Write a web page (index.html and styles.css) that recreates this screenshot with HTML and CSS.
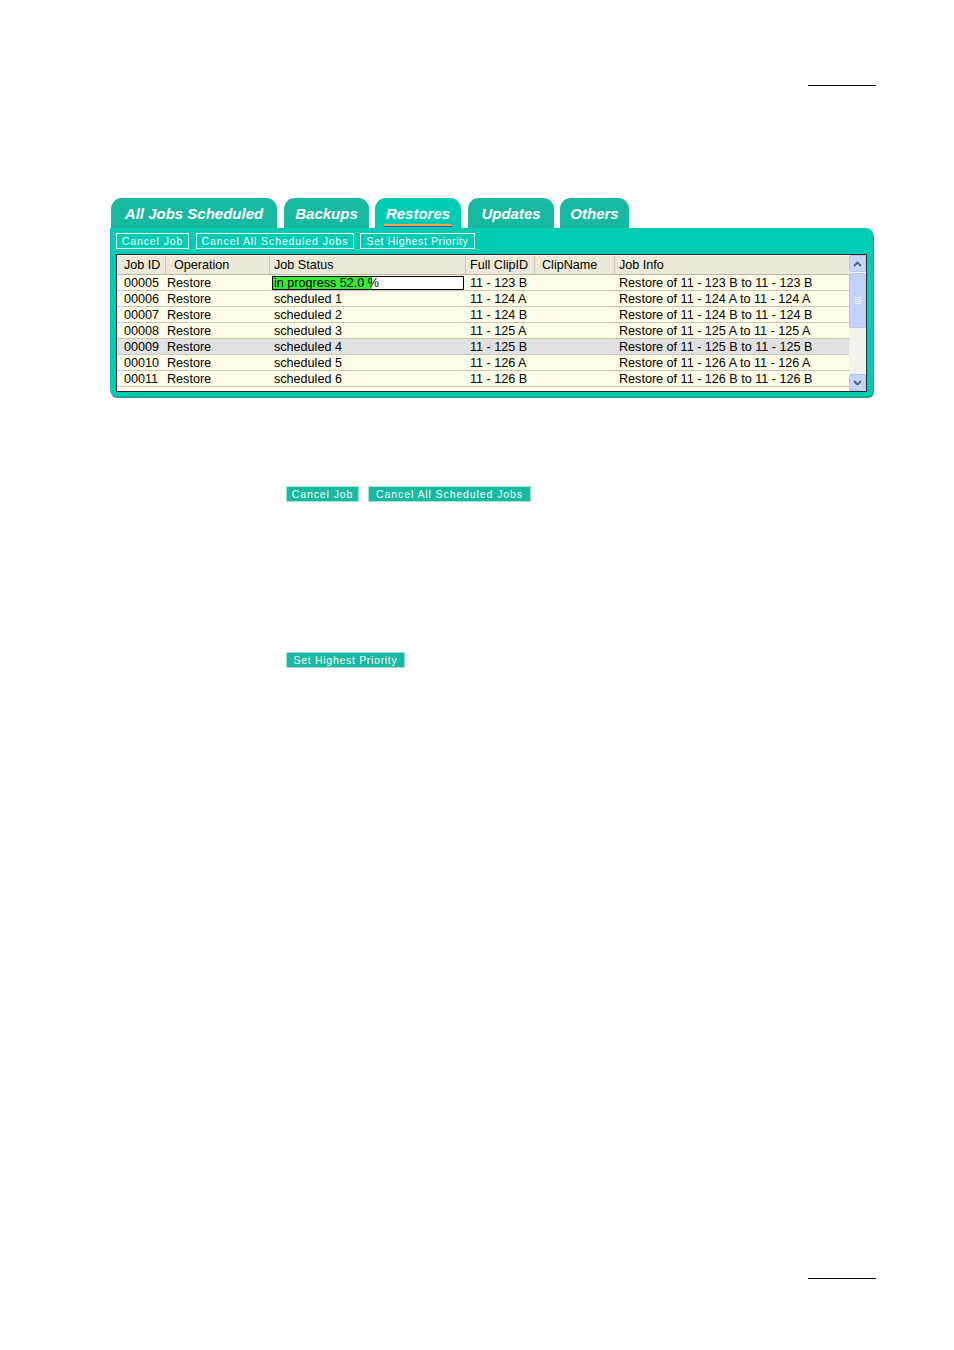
FILE: index.html
```html
<!DOCTYPE html>
<html>
<head>
<meta charset="utf-8">
<link rel="stylesheet" href="styles.css">
</head>
<body>
<div class="page">
  <div class="rule rule-top"></div>

  <div class="panel">
    <div class="tabs">
      <div class="tab tab-all">All Jobs Scheduled</div>
      <div class="tab tab-backups">Backups</div>
      <div class="tab tab-active tab-restores"><span class="uline">Restores</span></div>
      <div class="tab tab-updates">Updates</div>
      <div class="tab tab-others">Others</div>
    </div>
    <div class="panel-body">
      <div class="toolbar">
        <div class="obtn b1">Cancel Job</div>
        <div class="obtn b2">Cancel All Scheduled Jobs</div>
        <div class="obtn b3">Set Highest Priority</div>
      </div>
      <div class="grid-wrap">
        <div class="grid">
          <div class="row head">
            <div class="c c1">Job ID</div>
            <div class="c c2">Operation</div>
            <div class="c c3">Job Status</div>
            <div class="c c4">Full ClipID</div>
            <div class="c c5">ClipName</div>
            <div class="c c6">Job Info</div>
          </div>
          <div class="row">
            <div class="c c1">00005</div>
            <div class="c c2">Restore</div>
            <div class="c c3 prog-cell"><div class="prog"><div class="prog-fill" style="width:52%"></div><span class="prog-text">in progress 52.0 %</span></div></div>
            <div class="c c4">11 - 123 B</div>
            <div class="c c5"></div>
            <div class="c c6">Restore of 11 - 123 B to 11 - 123 B</div>
          </div>
          <div class="row">
            <div class="c c1">00006</div>
            <div class="c c2">Restore</div>
            <div class="c c3">scheduled 1</div>
            <div class="c c4">11 - 124 A</div>
            <div class="c c5"></div>
            <div class="c c6">Restore of 11 - 124 A to 11 - 124 A</div>
          </div>
          <div class="row">
            <div class="c c1">00007</div>
            <div class="c c2">Restore</div>
            <div class="c c3">scheduled 2</div>
            <div class="c c4">11 - 124 B</div>
            <div class="c c5"></div>
            <div class="c c6">Restore of 11 - 124 B to 11 - 124 B</div>
          </div>
          <div class="row">
            <div class="c c1">00008</div>
            <div class="c c2">Restore</div>
            <div class="c c3">scheduled 3</div>
            <div class="c c4">11 - 125 A</div>
            <div class="c c5"></div>
            <div class="c c6">Restore of 11 - 125 A to 11 - 125 A</div>
          </div>
          <div class="row sel">
            <div class="c c1">00009</div>
            <div class="c c2">Restore</div>
            <div class="c c3">scheduled 4</div>
            <div class="c c4">11 - 125 B</div>
            <div class="c c5"></div>
            <div class="c c6">Restore of 11 - 125 B to 11 - 125 B</div>
          </div>
          <div class="row">
            <div class="c c1">00010</div>
            <div class="c c2">Restore</div>
            <div class="c c3">scheduled 5</div>
            <div class="c c4">11 - 126 A</div>
            <div class="c c5"></div>
            <div class="c c6">Restore of 11 - 126 A to 11 - 126 A</div>
          </div>
          <div class="row">
            <div class="c c1">00011</div>
            <div class="c c2">Restore</div>
            <div class="c c3">scheduled 6</div>
            <div class="c c4">11 - 126 B</div>
            <div class="c c5"></div>
            <div class="c c6">Restore of 11 - 126 B to 11 - 126 B</div>
          </div>
          <div class="row partial"></div>
        </div>
        <div class="scrollbar">
          <div class="sb-btn">
            <svg width="9" height="6" viewBox="0 0 9 6"><path d="M1 5 L4.5 1.5 L8 5" fill="none" stroke="#4d6185" stroke-width="1.8"/></svg>
          </div>
          <div class="sb-thumb">
            <div class="grip"></div><div class="grip"></div><div class="grip"></div><div class="grip"></div>
          </div>
          <div class="sb-track"></div>
          <div class="sb-btn">
            <svg width="9" height="6" viewBox="0 0 9 6"><path d="M1 1 L4.5 4.5 L8 1" fill="none" stroke="#4d6185" stroke-width="1.8"/></svg>
          </div>
        </div>
      </div>
    </div>
  </div>

  <div class="btn-row btn-row-1">
    <div class="fbtn f1">Cancel Job</div>
    <div class="fbtn f2">Cancel All Scheduled Jobs</div>
  </div>

  <div class="btn-row btn-row-2">
    <div class="fbtn f3">Set Highest Priority</div>
  </div>

  <div class="rule rule-bottom"></div>
</div>
</body>
</html>
```

FILE: styles.css
```css
html, body {
  margin: 0;
  padding: 0;
  background: #ffffff;
}

.page {
  width: 954px;
  height: 1350px;
  display: flow-root;
  overflow: hidden;
  font-family: "Liberation Sans", Arial, sans-serif;
}

.rule {
  width: 68px;
  margin-left: 808px;
  border-top: 1px solid #000;
}

.rule-top {
  margin-top: 85px;
}

.rule-bottom {
  margin-top: 609px;
}

/* ---------- panel ---------- */
.panel {
  margin-top: 112px;
  margin-left: 110px;
  width: 764px;
}

.tabs {
  display: flex;
  height: 30px;
  padding-left: 1px;
}

.tab {
  height: 30px;
  box-sizing: border-box;
  background: #17b9a0;
  border-radius: 11px 11px 0 0;
  color: #ffffff;
  font-weight: bold;
  font-style: italic;
  font-size: 15px;
  line-height: 31px;
  text-align: center;
  margin-right: 6px;
}

.tab-all { width: 166px; }
.tab-backups { width: 85px; margin-left: 1px; }
.tab-restores { width: 86px; }
.tab-updates { width: 86px; margin-left: 1px; }
.tab-others { width: 69px; }

.tab-active {
  background: #00ccb4;
}

.uline {
  display: inline-block;
  line-height: 18px;
  padding: 0 2px 1px 2px;
  border-bottom: 2px solid #f7a04a;
  box-shadow: 0 1px 0 #3a5aa8;
}

.panel-body {
  background: #00ccb4;
  border-radius: 0 7px 6px 6px;
  width: 763px;
  height: 168px;
  box-sizing: border-box;
  padding: 5px 6px 0 6px;
  box-shadow: 1px 2px 0 #15a893;
}

.toolbar {
  display: flex;
  height: 16px;
}

.obtn {
  box-sizing: border-box;
  height: 16px;
  border: 1px solid #e8fffb;
  color: #ffffff;
  font-size: 10.5px;
  letter-spacing: 0.9px;
  line-height: 14px;
  text-align: center;
  margin-right: 6px;
  white-space: nowrap;
  overflow: hidden;
}

.b1 { width: 73px; }
.b2 { width: 158px; margin-left: 1px; }
.b3 { width: 115px; letter-spacing: 0.6px; }

.grid-wrap {
  margin-top: 5px;
  width: 751px;
  height: 138px;
  box-sizing: border-box;
  border: 1px solid #2b2b2b;
  display: flex;
  background: #fffce8;
  font-size: 12.6px;
  color: #000;
}

.grid {
  width: 732px;
  overflow: hidden;
}

.row {
  display: grid;
  grid-template-columns: 49px 104px 196px 69px 80px 234px;
  height: 16px;
  box-sizing: border-box;
  border-bottom: 1px solid #c8c6bc;
  background: #fffce8;
}

.row.head {
  height: 20px;
  background: #ece9d8;
  border-top: 1px solid #f7f6ef;
  border-bottom: 1px solid #b9b6a6;
}

.row.sel {
  background: #e1e1e1;
}

.row.partial {
  height: 5px;
}

.c {
  white-space: nowrap;
  overflow: hidden;
  line-height: 16px;
}

.head .c {
  line-height: 18px;
  padding-left: 7px;
  border-right: 1px solid #c9c5b2;
}

.head .c6 { border-right: none; }

.row .c1 { padding-left: 7px; }
.row .c2 { padding-left: 1px; }
.row .c3 { padding-left: 4px; }
.row .c4 { padding-left: 4px; }
.row .c6 { padding-left: 4px; }

.head .c2 { padding-left: 8px; }

.prog-cell {
  padding-left: 2px !important;
  padding-top: 1px;
}

.prog {
  position: relative;
  width: 192px;
  height: 14px;
  box-sizing: border-box;
  border: 1px solid #000;
  background: #ffffff;
}

.prog-fill {
  height: 100%;
  background: #35ec35;
}

.prog-text {
  position: absolute;
  left: 1px;
  top: 0;
  line-height: 13px;
}

/* ---------- scrollbar ---------- */
.scrollbar {
  width: 17px;
  display: flex;
  flex-direction: column;
  background: #f4f3ee;
}

.sb-btn {
  height: 17px;
  box-sizing: border-box;
  background: #c7d6fb;
  border: 1px solid #b1c4f2;
  border-radius: 2px;
  display: flex;
  align-items: center;
  justify-content: center;
}

.sb-thumb {
  height: 55px;
  box-sizing: border-box;
  margin-top: 1px;
  background: #c3d3fb;
  border: 1px solid #b3c6f4;
  border-radius: 2px;
  display: flex;
  flex-direction: column;
  align-items: center;
  justify-content: center;
  gap: 1px;
}

.grip {
  width: 6px;
  height: 1px;
  background: #eef3ff;
}

.sb-track {
  flex: 1;
}

/* ---------- standalone buttons ---------- */
.btn-row {
  display: flex;
  margin-left: 286px;
}

.btn-row-1 {
  margin-top: 90px;
}

.btn-row-2 {
  margin-top: 150px;
}

.fbtn {
  box-sizing: border-box;
  height: 16px;
  background: #17b9a0;
  border: 1px solid #9fe3d6;
  color: #ffffff;
  font-size: 10.5px;
  letter-spacing: 0.9px;
  line-height: 14px;
  text-align: center;
  margin-right: 9px;
  white-space: nowrap;
  overflow: hidden;
}

.f1 { width: 73px; }
.f2 { width: 163px; }
.f3 { width: 119px; letter-spacing: 0.7px; }

.btn-row-2 + .rule-bottom {
  margin-top: 610px;
}
```
